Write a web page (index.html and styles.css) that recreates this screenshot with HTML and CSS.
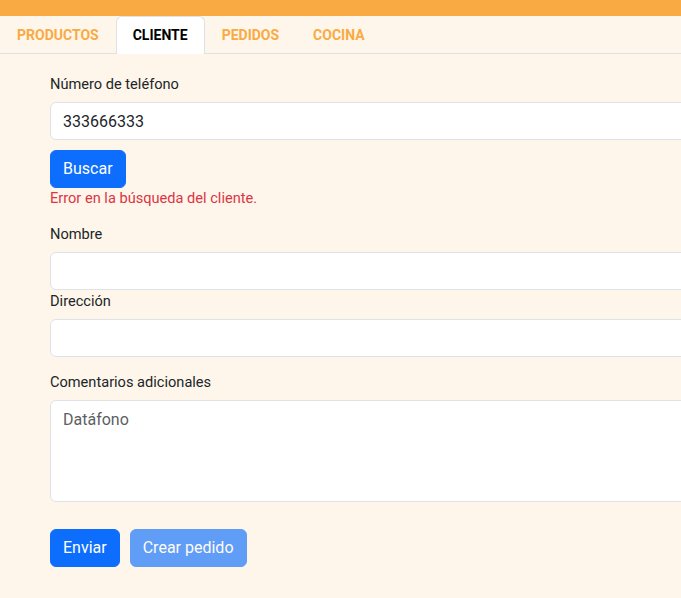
FILE: index.html
```html
<!DOCTYPE html>
<html lang="es">
<head>
<meta charset="utf-8">
<title>Cliente</title>
<link rel="stylesheet" href="styles.css">
</head>
<body>
<div class="topbar"></div>
<ul class="tabs">
  <li><a class="tab">PRODUCTOS</a></li>
  <li><a class="tab active">CLIENTE</a></li>
  <li><a class="tab">PEDIDOS</a></li>
  <li><a class="tab">COCINA</a></li>
</ul>
<main class="content">
  <form class="form">
    <label class="label">Número de teléfono</label>
    <input class="control" type="text" value="333666333">
    <button type="button" class="btn btn-search">Buscar</button>
    <div class="error">Error en la búsqueda del cliente.</div>

    <label class="label label-gap">Nombre</label>
    <input class="control" type="text">
    <label class="label">Dirección</label>
    <input class="control" type="text">

    <label class="label label-gap2">Comentarios adicionales</label>
    <textarea class="control area" placeholder="Datáfono"></textarea>

    <div class="actions">
      <button type="button" class="btn">Enviar</button>
      <button type="button" class="btn" disabled>Crear pedido</button>
    </div>
  </form>
</main>
</body>
</html>
```

FILE: styles.css
```css
* { box-sizing: border-box; }
html, body { margin: 0; padding: 0; }
body {
  background: #fef6ea;
  font-family: Roboto, "Liberation Sans", sans-serif;
  color: #212529;
  overflow: hidden;
  width: 681px;
  height: 598px;
}
.topbar {
  height: 16px;
  background: #f9aa43;
}
.tabs {
  list-style: none;
  margin: 0;
  padding: 0;
  display: flex;
  border-bottom: 1px solid #dee2e6;
}
.tab {
  display: block;
  padding: 8px 16px 9px;
  font-size: 14px;
  font-weight: 700;
  line-height: 20px;
  color: #f9aa43;
  border: 1px solid transparent;
  border-bottom: 0;
  border-top-left-radius: 6px;
  border-top-right-radius: 6px;
  margin-bottom: -1px;
}
.tab.active {
  color: #000;
  background: #fff;
  border-color: #dee2e6;
}
.content {
  padding: 19px 0 0 50px;
}
.form {
  width: 760px;
  display: flex;
  flex-direction: column;
  align-items: flex-start;
}
.label {
  font-size: 14.6px;
  line-height: 21px;
  padding-top: 1px;
  margin-bottom: 7px;
}
.label-gap { margin-top: 14px; }
.label-gap2 { margin-top: 14px; }
.control {
  width: 100%;
  height: 38px;
  padding: 6px 12px;
  font-family: inherit;
  font-size: 16px;
  line-height: 24px;
  color: #212529;
  background: #fff;
  border: 1px solid #dee2e6;
  border-radius: 6px;
  outline: none;
}
.area {
  height: 102px;
  padding-top: 7px;
  resize: none;
}
.area::placeholder { color: #5c5f63; opacity: 1; }
.btn {
  font-family: inherit;
  font-size: 16px;
  line-height: 24px;
  padding: 6px 12px;
  height: 38px;
  color: #fff;
  background: #0d6efd;
  border: 1px solid #0d6efd;
  border-radius: 6px;
}
.btn:disabled { opacity: 0.65; }
.btn-search { margin-top: 10px; }
.error {
  font-size: 14.6px;
  line-height: 21px;
  color: #dc3545;
}
.actions {
  display: flex;
  gap: 10px;
  margin-top: 27px;
}
```
